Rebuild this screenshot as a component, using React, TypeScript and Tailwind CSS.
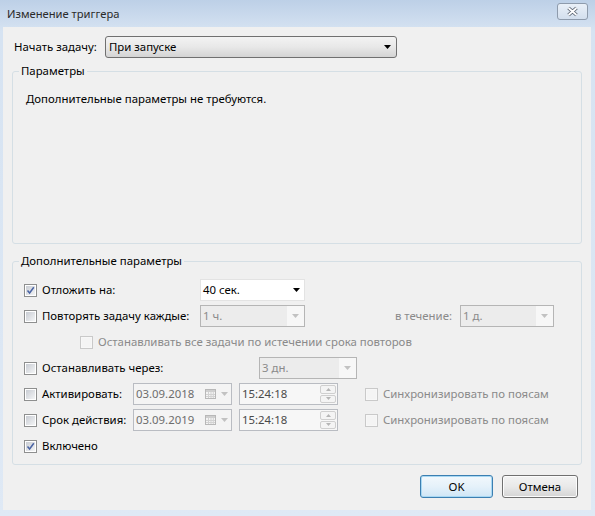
import React from "react";

function Arrow({ color = "#000" }: { color?: string }) {
  return (
    <svg width="7" height="4" viewBox="0 0 7 4" className="shrink-0">
      <polygon points="0,0 7,0 3.5,4" fill={color} />
    </svg>
  );
}

function Check({ checked = false, disabled = false }: { checked?: boolean; disabled?: boolean }) {
  return (
    <span
      className={
        disabled
          ? "flex h-[13px] w-[13px] shrink-0 items-center justify-center border border-[#c9c9c9] bg-[#f7f7f7]"
          : "flex h-[13px] w-[13px] shrink-0 items-center justify-center border border-[#8e8f8f] bg-white"
      }
    >
      <span
        className={
          disabled
            ? "flex h-[9px] w-[9px] items-center justify-center bg-[#f4f4f4]"
            : "flex h-[9px] w-[9px] items-center justify-center bg-gradient-to-br from-[#c8ccd3] to-[#f4f5f6]"
        }
      >
        {checked && (
          <svg width="9" height="9" viewBox="0 0 9 9">
            <path d="M1.5 4.5 L3.6 7 L7.8 1.2" stroke="#4a64a4" strokeWidth="1.5" fill="none" />
          </svg>
        )}
      </span>
    </span>
  );
}

function DisabledCombo({ text, w }: { text: string; w: string }) {
  return (
    <div className={`flex h-[22px] ${w} items-stretch border border-[#b5b5b5] bg-[#f7f7f7]`}>
      <div className="flex flex-1 items-center bg-[#ececec] pl-[2px] text-[#8a8a8a]">{text}</div>
      <div className="flex w-[17px] items-center justify-center">
        <Arrow color="#c2c2c2" />
      </div>
    </div>
  );
}

function DateBox({ text }: { text: string }) {
  return (
    <div className="flex h-[22px] w-[99px] items-center border border-[#b9bcc2] bg-[#f4f4f4] pl-[2px]">
      <span className="flex-1 text-[#6d6d6d]">{text}</span>
      <svg width="11" height="10" viewBox="0 0 11 10" className="mr-[1px]">
        <rect x="0.5" y="0.5" width="10" height="9" fill="#f4f4f4" stroke="#b8b8b8" />
        <rect x="1" y="1" width="9" height="2" fill="#cfcfcf" />
        <path d="M1 5.5 H10 M1 7.5 H10 M3.5 3 V9 M6 3 V9 M8.3 3 V9" stroke="#d2d2d2" strokeWidth="1" />
      </svg>
      <span className="flex w-[14px] justify-center">
        <Arrow color="#c2c2c2" />
      </span>
    </div>
  );
}

function TimeBox({ text }: { text: string }) {
  return (
    <div className="flex h-[22px] w-[99px] items-stretch border border-[#b9bcc2] bg-[#f7f7f7]">
      <span className="flex flex-1 items-center pl-[2px] text-[#4a4a4a]">{text}</span>
      <div className="my-[1px] mr-[1px] flex w-[16px] flex-col gap-[1px]">
        <div className="flex flex-1 items-center justify-center rounded-[2px] border border-[#cfcfcf] bg-[#f4f4f4]">
          <svg width="5" height="3" viewBox="0 0 5 3">
            <polygon points="0,3 5,3 2.5,0" fill="#b5b5b5" />
          </svg>
        </div>
        <div className="flex flex-1 items-center justify-center rounded-[2px] border border-[#cfcfcf] bg-[#f4f4f4]">
          <svg width="5" height="3" viewBox="0 0 5 3">
            <polygon points="0,0 5,0 2.5,3" fill="#b5b5b5" />
          </svg>
        </div>
      </div>
    </div>
  );
}

function Row({ children }: { children: React.ReactNode }) {
  return <div className="flex h-[26px] items-center">{children}</div>;
}

export default function App() {
  return (
    <div className="h-[516px] w-[595px] bg-gradient-to-b from-[#bdd0e7] via-[#d6e3f2] via-[6%] to-[#dfe9f5] font-['Noto_Sans',sans-serif] text-[11.4px] leading-[16px] text-black">
      {/* Title bar */}
      <div className="flex h-[27px] items-center justify-between pl-[7px] pr-[7px]">
        <span className="text-[11.2px] text-[#2a2a2a]">Изменение триггера</span>
        <div className="mb-[4px] flex h-[17px] w-[31px] items-center justify-center rounded-[3px] border border-[#8e9bac] bg-gradient-to-b from-[#e9f0f8] to-[#d3dfee]">
          <svg width="13" height="11" viewBox="0 0 13 11">
            <path d="M2.5 2 L10.5 9 M10.5 2 L2.5 9" stroke="#5c6573" strokeWidth="3.6" />
            <path d="M2.5 2 L10.5 9 M10.5 2 L2.5 9" stroke="#ffffff" strokeWidth="1.7" />
          </svg>
        </div>
      </div>

      {/* Client */}
      <div className="ml-[3px] flex h-[483px] w-[588px] flex-col bg-[#f0f0f0]">
        <div className="mt-[9px] flex h-[22px] items-center">
          <span className="ml-[11px] w-[91px]">Начать задачу:</span>
          <div className="flex h-[22px] w-[292px] items-center justify-between rounded-[3px] border border-[#707070] bg-gradient-to-b from-[#f3f3f3] via-[#e8e8e8] to-[#d4d4d4] pl-[3px] pr-[5px]">
            <span>При запуске</span>
            <Arrow />
          </div>
        </div>

        {/* Group 1 */}
        <div className="mx-[9px] mt-[13px] flex h-[173px] flex-col rounded-[3px] border border-[#d5dfe5]">
          <span className="ml-[6px] -mt-[9px] w-fit bg-[#f0f0f0] px-[2px]">Параметры</span>
          <span className="ml-[13px] mt-[12px]">Дополнительные параметры не требуются.</span>
        </div>

        {/* Group 2 */}
        <div className="mx-[9px] mt-[17px] flex h-[204px] flex-col rounded-[3px] border border-[#d5dfe5] pl-[11px]">
          <span className="-ml-[5px] -mt-[9px] w-fit bg-[#f0f0f0] px-[2px]">Дополнительные параметры</span>
          <div className="mt-[8px] flex flex-col">
            <Row>
              <div className="flex w-[176px] items-center gap-[5px]">
                <Check checked />
                <span>Отложить на:</span>
              </div>
              <div className="flex h-[22px] w-[105px] items-center justify-between border border-[#e3e3e3] bg-white pl-[2px] pr-[4px]">
                <span>40 сек.</span>
                <Arrow />
              </div>
            </Row>
            <Row>
              <div className="flex w-[176px] items-center gap-[5px]">
                <Check />
                <span>Повторять задачу каждые:</span>
              </div>
              <DisabledCombo text="1 ч." w="w-[105px]" />
              <span className="w-[155px] pr-[8px] text-right text-[#8a8a8a]">в течение:</span>
              <DisabledCombo text="1 д." w="w-[94px]" />
            </Row>
            <Row>
              <div className="ml-[56px] flex items-center gap-[5px]">
                <Check disabled />
                <span className="text-[#8a8a8a]">Останавливать все задачи по истечении срока повторов</span>
              </div>
            </Row>
            <Row>
              <div className="flex w-[235px] items-center gap-[5px]">
                <Check />
                <span>Останавливать через:</span>
              </div>
              <DisabledCombo text="3 дн." w="w-[98px]" />
            </Row>
            <Row>
              <div className="flex w-[109px] items-center gap-[5px]">
                <Check />
                <span>Активировать:</span>
              </div>
              <DateBox text="03.09.2018" />
              <div className="ml-[7px]">
                <TimeBox text="15:24:18" />
              </div>
              <div className="ml-[27px] flex items-center gap-[5px]">
                <Check disabled />
                <span className="text-[#8a8a8a]">Синхронизировать по поясам</span>
              </div>
            </Row>
            <Row>
              <div className="flex w-[109px] items-center gap-[5px]">
                <Check />
                <span>Срок действия:</span>
              </div>
              <DateBox text="03.09.2019" />
              <div className="ml-[7px]">
                <TimeBox text="15:24:18" />
              </div>
              <div className="ml-[27px] flex items-center gap-[5px]">
                <Check disabled />
                <span className="text-[#8a8a8a]">Синхронизировать по поясам</span>
              </div>
            </Row>
            <Row>
              <div className="flex items-center gap-[5px]">
                <Check checked />
                <span>Включено</span>
              </div>
            </Row>
          </div>
        </div>

        {/* Buttons */}
        <div className="mr-[13px] mt-[10px] flex justify-end gap-[9px]">
          <button className="flex h-[23px] w-[73px] items-center justify-center rounded-[3px] border border-[#3c7fb1] bg-gradient-to-b from-[#f2f8fc] via-[#e5f1fa] to-[#cfe6f6] shadow-[inset_0_0_0_1px_#a8d8f3]">
            OK
          </button>
          <button className="flex h-[23px] w-[76px] items-center justify-center rounded-[3px] border border-[#707070] bg-gradient-to-b from-[#f3f3f3] via-[#e9e9e9] to-[#d5d5d5] shadow-[inset_0_0_0_1px_#fcfcfc]">
            Отмена
          </button>
        </div>
      </div>
    </div>
  );
}
